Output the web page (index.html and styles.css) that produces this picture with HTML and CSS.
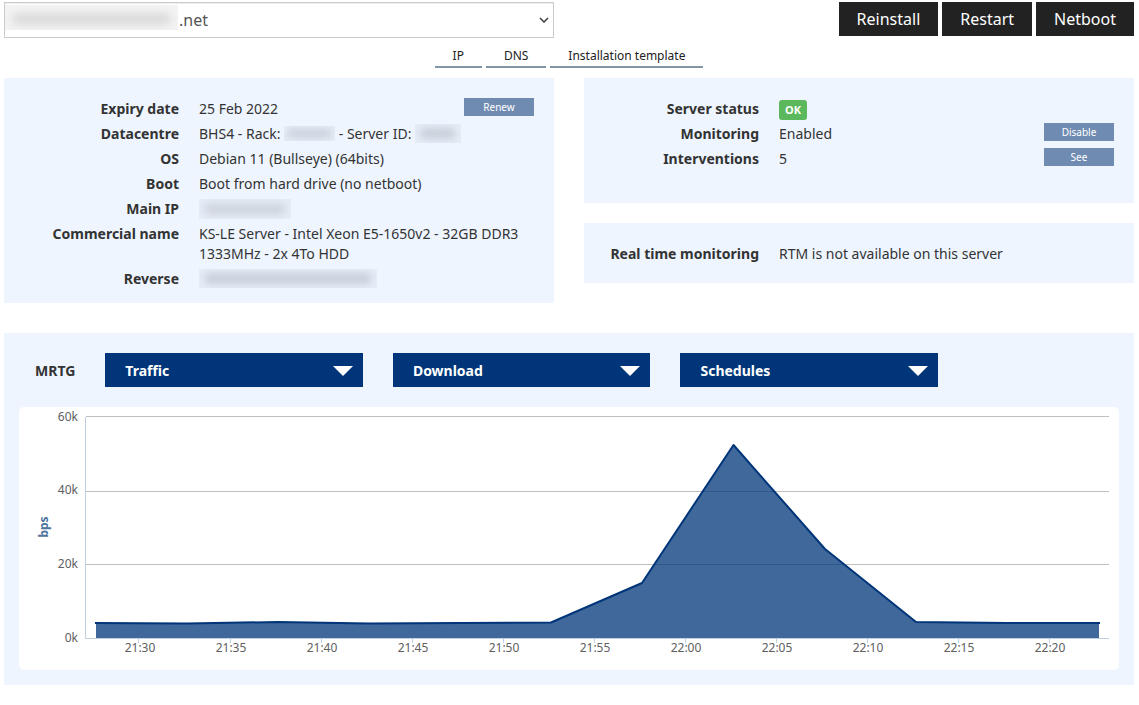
FILE: index.html
```html
<!DOCTYPE html>
<html lang="en">
<head>
<meta charset="utf-8">
<title>Server overview</title>
<link rel="stylesheet" href="styles.css">
</head>
<body>
<header class="topbar">
  <div class="server-picker">
    <select class="server-select" aria-label="Server"><option>.net</option></select>
    <span class="redacted redacted-server"></span>
    <svg class="chevron" width="10" height="6" viewBox="0 0 10 6" aria-hidden="true"><path d="M1 1l4 4 4-4" fill="none" stroke="#444" stroke-width="1.6"/></svg>
  </div>
  <div class="actions">
    <button class="action" type="button">Reinstall</button>
    <button class="action" type="button">Restart</button>
    <button class="action" type="button">Netboot</button>
  </div>
</header>

<nav class="tabs">
  <a class="tab" href="#ip">IP</a>
  <a class="tab" href="#dns">DNS</a>
  <a class="tab" href="#template">Installation template</a>
</nav>

<main>
  <div class="columns">
    <section class="panel">
      <dl class="facts">
        <div class="fact"><dt>Expiry date</dt><dd>25 Feb 2022</dd><dd class="control"><button class="small-button" type="button">Renew</button></dd></div>
        <div class="fact"><dt>Datacentre</dt><dd>BHS4 - Rack: <span class="redacted redacted-rack"></span> - Server ID: <span class="redacted redacted-id"></span></dd></div>
        <div class="fact"><dt>OS</dt><dd>Debian 11 (Bullseye) (64bits)</dd></div>
        <div class="fact"><dt>Boot</dt><dd>Boot from hard drive (no netboot)</dd></div>
        <div class="fact"><dt>Main IP</dt><dd><span class="redacted redacted-ip"></span></dd></div>
        <div class="fact"><dt>Commercial name</dt><dd>KS-LE Server - Intel Xeon E5-1650v2 - 32GB DDR3 1333MHz - 2x 4To HDD</dd></div>
        <div class="fact"><dt>Reverse</dt><dd><span class="redacted redacted-reverse"></span></dd></div>
      </dl>
    </section>
    <div class="side">
      <section class="panel panel-status">
        <dl class="facts">
          <div class="fact"><dt>Server status</dt><dd><span class="badge">OK</span></dd></div>
          <div class="fact"><dt>Monitoring</dt><dd>Enabled</dd><dd class="control"><button class="small-button" type="button">Disable</button></dd></div>
          <div class="fact"><dt>Interventions</dt><dd>5</dd><dd class="control"><button class="small-button" type="button">See</button></dd></div>
        </dl>
      </section>
      <section class="panel panel-rtm">
        <dl class="facts">
          <div class="fact"><dt>Real time monitoring</dt><dd>RTM is not available on this server</dd></div>
        </dl>
      </section>
    </div>
  </div>

  <section class="mrtg">
    <div class="filters">
      <h2 class="mrtg-title">MRTG</h2>
      <div class="filter"><select aria-label="Graph type"><option>Traffic</option></select></div>
      <div class="filter"><select aria-label="Direction"><option>Download</option></select></div>
      <div class="filter"><select aria-label="Period"><option>Schedules</option></select></div>
    </div>
    <div class="chart">
      <svg viewBox="0 0 1100 263" role="img" aria-label="Download traffic in bps">
        <path class="grid" d="M67 9.5H1090M67 84.5H1090M67 157.5H1090"/>
        <path class="area" d="M77 216L168 216.500L259 215L350 216.500L441 216L532 215.500L623 176L714.500 38L806 142L897 215L988 216L1080 216V231H77Z"/>
        <path class="axis" d="M66.500 10V231.500H1090M119.500 231V236M211.500 231V236M302.500 231V236M393.500 231V236M484.500 231V236M575.500 231V236M666.500 231V236M757.500 231V236M848.500 231V236M939.500 231V236M1030.500 231V236"/>
        <path class="line" d="M76 216L168 216.500L259 215L350 216.500L441 216L532 215.500L623 176L714.500 38L806 142L897 215L988 216L1081 216"/>
        <g class="y-labels">
          <text x="59" y="14">60k</text><text x="59" y="87">40k</text><text x="59" y="161">20k</text><text x="59" y="235">0k</text>
        </g>
        <g class="x-labels">
          <text x="121" y="245">21:30</text><text x="212" y="245">21:35</text><text x="303" y="245">21:40</text><text x="394" y="245">21:45</text><text x="485" y="245">21:50</text><text x="576" y="245">21:55</text><text x="667" y="245">22:00</text><text x="758" y="245">22:05</text><text x="849" y="245">22:10</text><text x="940" y="245">22:15</text><text x="1031" y="245">22:20</text>
        </g>
        <text class="unit" transform="translate(29 120) rotate(-90)">bps</text>
      </svg>
    </div>
  </section>
</main>
</body>
</html>
```

FILE: styles.css
```css
* { box-sizing: border-box; }

body {
  margin: 0;
  padding: 2px 5px 20px 4px;
  background: #fff;
  color: #333;
  font: 14px/20px "Noto Sans", "Open Sans", sans-serif;
}

button, select { font-family: inherit; margin: 0; border-radius: 0; }

.topbar {
  display: grid;
  grid-template-columns: 1fr 1fr;
  gap: 30px;
  align-items: start;
}

.server-picker { position: relative; }

.server-select {
  display: block;
  width: 100%;
  height: 36px;
  padding: 0 30px 0 174px;
  border: 1px solid #ccc;
  background: #fff;
  box-shadow: inset 0 1px 1px rgba(0, 0, 0, 0.075);
  color: #555;
  font-size: 16px;
  appearance: none;
}

.chevron { position: absolute; right: 5px; top: 15px; pointer-events: none; }

.actions { display: flex; justify-content: flex-end; gap: 4px; }

.action {
  height: 34px;
  padding: 0 18px;
  border: 0;
  background: #222;
  color: #fff;
  font-size: 16px;
}

.tabs { display: flex; justify-content: center; gap: 4px; margin: 8px 0 10px; }

.tab {
  padding: 0 18px;
  border-bottom: 2px solid #8295a5;
  color: #222;
  font-size: 12px;
  text-decoration: none;
}

.columns {
  display: grid;
  grid-template-columns: 1fr 1fr;
  gap: 30px;
}

.panel { padding: 20px 20px 10px 0; background: #eef5ff; }
.panel-status { padding-bottom: 30px; }
.panel-rtm { padding-bottom: 15px; }
.side { display: flex; flex-direction: column; gap: 20px; }

.facts { margin: 0; }
.fact { display: flex; padding: 1px 0 4px; }
.fact dt {
  flex: 0 0 175px;
  margin-right: 20px;
  font-weight: 700;
  text-align: right;
}
.fact dd { margin: 0; min-width: 0; }
.fact .control { margin: -1px 0 0 auto; height: 18px; }

.small-button {
  display: block;
  width: 70px;
  height: 18px;
  padding: 0;
  border: 0;
  background: #6f8bb1;
  color: #fff;
  font-size: 10px;
  line-height: 18px;
}

.badge {
  display: block;
  margin: 1px 0 -1px;
  padding: 0 6px;
  border-radius: 3px;
  background: #5cb85c;
  color: #fff;
  font-size: 11px;
  font-weight: 700;
  line-height: 20px;
}

/* Blurred stand-ins for private values */
.redacted {
  display: inline-block;
  position: relative;
  overflow: hidden;
  vertical-align: top;
  background: #e6edf7;
}
.redacted::before {
  content: "";
  position: absolute;
  inset: 5px 6px;
  background: #c3c9d3;
  filter: blur(4px);
}
.redacted-rack { width: 51px; height: 15px; margin-top: 2px; }
.redacted-rack::before { inset: 4px 4px; }
.redacted-id { width: 46px; height: 19px; }
.redacted-ip { width: 92px; height: 20px; }
.redacted-ip::before { background: #cbd1db; }
.redacted-reverse { width: 178px; height: 19px; }
.redacted-server {
  position: absolute;
  left: 1px;
  top: 3px;
  width: 173px;
  height: 25px;
  background: #f3f3f3;
  pointer-events: none;
}
.redacted-server::before { inset: 9px 8px 6px; background: #d8d8d8; }

.mrtg { margin-top: 30px; padding: 20px 15px 15px; background: #eef5ff; }

.filters {
  display: flex;
  align-items: center;
  gap: 30px;
  margin-bottom: 20px;
  padding: 0 181px 0 16px;
}
.mrtg-title {
  flex: 0 0 40px;
  margin: 0;
  padding-top: 2px;
  font-size: 14px;
  line-height: 20px;
}
.filter { position: relative; flex: 1; }
.filter select {
  display: block;
  width: 100%;
  height: 34px;
  padding: 0 40px 0 20px;
  border: 0;
  background: #003579;
  color: #fff;
  font-size: 14px;
  font-weight: 700;
  appearance: none;
}
.filter::after {
  content: "";
  position: absolute;
  right: 10px;
  top: 13px;
  border: 10px solid transparent;
  border-top-color: #fff;
  border-bottom: 0;
  pointer-events: none;
}

.chart { border-radius: 5px; background: #fff; }
.chart svg { display: block; width: 100%; }
.grid, .axis, .line { fill: none; }
.grid { stroke: #c0c0c0; }
.axis { stroke: #c0d0e0; }
.area { fill: #003579; fill-opacity: 0.75; }
.line { stroke: #003579; stroke-width: 2; stroke-linejoin: round; }
.chart text { fill: #606060; font-size: 12px; }
.y-labels { text-anchor: end; }
.x-labels { text-anchor: middle; }
.chart .unit { fill: #4d759e; font-weight: 700; text-anchor: middle; }
```
